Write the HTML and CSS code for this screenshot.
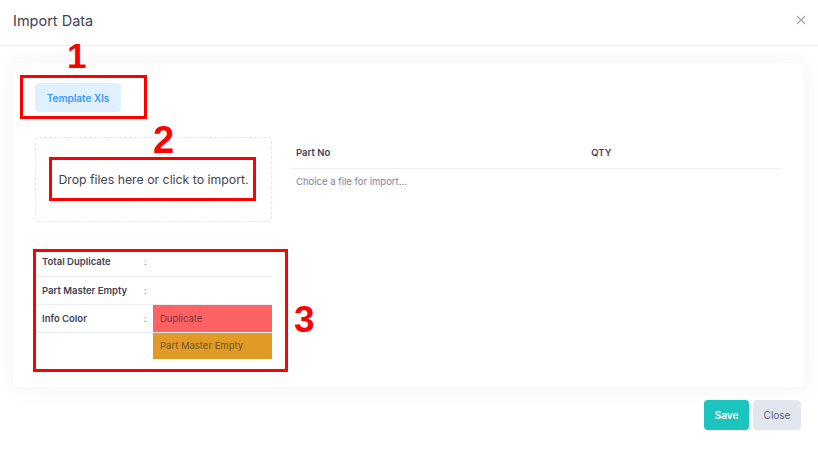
FILE: index.html
```html
<!DOCTYPE html>
<html>
<head>
<meta charset="utf-8">
<link rel="stylesheet" href="styles.css">
</head>
<body>
<div class="modal">
  <div class="modal-header">
    <div class="modal-title">Import Data</div>
    <svg class="close-x" width="10" height="10" viewBox="0 0 10 10"><path d="M1 1L9 9M9 1L1 9" stroke="#a1a5b7" stroke-width="1.1" fill="none"/></svg>
  </div>
  <div class="modal-body">
    <div class="card">
      <button class="btn-template">Template Xls</button>
      <div class="card-row">
        <div class="left-col">
          <div class="dropzone">Drop files here or click to import.</div>
          <table class="info">
            <tr><td class="lbl">Total Duplicate</td><td class="colon">:</td><td class="val"></td></tr>
            <tr><td class="lbl">Part Master Empty</td><td class="colon">:</td><td class="val"></td></tr>
            <tr><td class="lbl">Info Color</td><td class="colon">:</td><td class="val dup">Duplicate</td></tr>
            <tr><td class="lbl"></td><td class="colon"></td><td class="val empty">Part Master Empty</td></tr>
          </table>
        </div>
        <div class="right-col">
          <table class="data">
            <thead><tr><th class="c-part">Part No</th><th>QTY</th></tr></thead>
            <tbody><tr><td colspan="2" class="hint">Choice a file for import...</td></tr></tbody>
          </table>
        </div>
      </div>
    </div>
  </div>
  <div class="modal-footer">
    <button class="btn btn-save">Save</button>
    <button class="btn btn-close">Close</button>
  </div>

  <div class="mark box1"></div>
  <div class="num num1">1</div>
  <div class="mark box2"></div>
  <div class="num num2">2</div>
  <div class="mark box3"></div>
  <div class="num num3">3</div>
</div>
</body>
</html>
```

FILE: styles.css
```css
* { box-sizing: border-box; }
html, body { margin: 0; padding: 0; background: #fff; }
body { font-family: Inter, "Open Sans", sans-serif; color: #3f4254; }
.modal { position: relative; width: 818px; height: 457px; }

.modal-header {
  height: 46px;
  border-bottom: 1px solid #ebedf3;
  display: flex; align-items: center; justify-content: space-between;
  padding: 0 13px 5px 13px;
}
.modal-title { font-size: 14.5px; font-weight: 400; color: #3f4254; }
.close-x { margin-right: -1px; }

.modal-body { padding: 17px 14px 0 13px; }
.card {
  height: 324px;
  background: #fff;
  border-radius: 6px;
  box-shadow: 0 0 22px rgba(82, 63, 105, 0.07);
  padding: 20px 22px 0 22px;
}
.btn-template {
  display: block;
  width: 86px; height: 29px;
  border: 0; border-radius: 4px;
  background: #e1f0ff; color: #3699ff;
  font-family: inherit; font-size: 10px; font-weight: 600;
  padding: 0;
}
.card-row { display: flex; margin-top: 25px; }
.left-col { width: 237px; flex: none; }
.dropzone {
  height: 85px;
  border: 1px dashed #e4e6ef; border-radius: 4px;
  display: flex; align-items: center; justify-content: center;
  font-size: 12.3px; color: #3f4254;
  padding-bottom: 1px;
}
.info { width: 100%; border-collapse: collapse; margin-top: 26px; font-size: 9.5px; }
.info td { height: 28px; padding: 0; border-bottom: 1px solid #ebedf3; vertical-align: middle; }
.info tr:last-child td { border-bottom: 0; height: 27px; }
.info .lbl { width: 109px; padding-left: 7px; font-weight: 600; color: #3f4254; }
.info .colon { width: 9px; color: #7e8299; font-size: 9px; }
.info .val { padding-left: 7px; }
.info .dup { background: #ff6262; color: #7f3440; }
.info .empty { background: #e29a27; color: #6e5427; }

.right-col { flex: 1; margin-left: 18px; }
.data { width: 100%; border-collapse: collapse; font-size: 9.5px; }
.data th {
  text-align: left; font-weight: 600; color: #3f4254;
  height: 31px; padding: 0 0 0 6px;
  border-bottom: 1px solid #ebedf3;
}
.data .c-part { width: 60%; }
.data .hint { color: #7e8299; font-weight: 400; padding: 7px 0 0 6px; }

.modal-footer { display: flex; justify-content: flex-end; gap: 4px; padding: 13px 17px 0 0; }
.btn {
  height: 30px; border: 0; border-radius: 4px;
  font-family: inherit; font-size: 10px; padding: 0;
}
.btn-save { width: 45px; background: #1bc5bd; color: #fff; font-weight: 600; }
.btn-close { width: 48px; background: #e4e6ef; color: #5e6278; }

.mark { position: absolute; border: 3px solid #ff0000; }
.box1 { left: 20px; top: 75px; width: 127px; height: 44px; }
.box2 { left: 49px; top: 157px; width: 207px; height: 44px; }
.box3 { left: 33px; top: 249px; width: 255px; height: 123px; }
.num {
  position: absolute;
  font-family: "Liberation Sans", Arial, sans-serif;
  font-weight: 700; color: #ff0000; line-height: 1;
}
.num1 { left: 67px; top: 38px; font-size: 35px; }
.num2 { left: 153px; top: 121px; font-size: 38px; }
.num3 { left: 294px; top: 301px; font-size: 37px; }
```
